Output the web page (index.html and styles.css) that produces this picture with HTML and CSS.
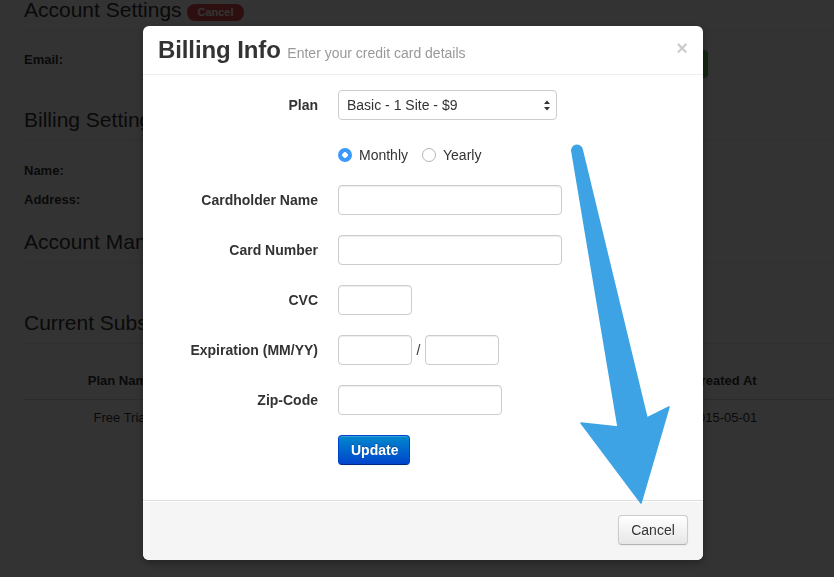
FILE: index.html
```html
<!DOCTYPE html>
<html lang="en">
<head>
    <meta charset="UTF-8">
    <meta name="viewport" content="width=device-width, initial-scale=1.0">
    <title>Account Settings - Billing Info</title>
    <link rel="stylesheet" href="styles.css">
</head>
<body>
    <div class="page">
        <h2 class="section-title">Account Settings <span class="badge-cancel">Cancel</span></h2>
        <div class="email-row">
            <span class="field-label">Email:</span>
            <button class="btn-success">Save</button>
        </div>

        <h2 class="section-title billing-title">Billing Settings</h2>
        <div class="info-row first"><span class="field-label">Name:</span></div>
        <div class="info-row"><span class="field-label">Address:</span></div>

        <h2 class="section-title manage-title">Account Management</h2>

        <h2 class="section-title subs-title">Current Subscription</h2>
        <table class="subs-table">
            <colgroup>
                <col style="width: 194px">
                <col style="width: 132px">
                <col style="width: 132px">
                <col style="width: 132px">
                <col style="width: 220px">
            </colgroup>
            <thead>
                <tr>
                    <th>Plan Name</th>
                    <th>Price</th>
                    <th>Status</th>
                    <th>Ends At</th>
                    <th>Created At</th>
                </tr>
            </thead>
            <tbody>
                <tr>
                    <td>Free Trial</td>
                    <td>$0</td>
                    <td>Active</td>
                    <td>2015-05-15</td>
                    <td>2015-05-01</td>
                </tr>
            </tbody>
        </table>
    </div>

    <div class="backdrop"></div>

    <div class="modal">
        <div class="modal-header">
            <button class="close">&times;</button>
            <h3>Billing Info <small>Enter your credit card details</small></h3>
        </div>
        <div class="modal-body">
            <form class="form-horizontal">
                <div class="control-group">
                    <label class="control-label">Plan</label>
                    <div class="controls">
                        <div class="select-wrap">
                            <select class="plan-select">
                                <option>Basic - 1 Site - $9</option>
                                <option>Pro - 5 Sites - $29</option>
                            </select>
                            <svg class="select-caret" width="8" height="11" viewBox="0 0 8 11">
                                <path d="M4 0.5 L7 4 L1 4 Z" fill="#333"/>
                                <path d="M4 10.5 L7 7 L1 7 Z" fill="#333"/>
                            </svg>
                        </div>
                    </div>
                </div>
                <div class="control-group">
                    <div class="controls radio-row">
                        <label class="radio-inline"><input type="radio" name="interval" checked> Monthly</label>
                        <label class="radio-inline"><input type="radio" name="interval"> Yearly</label>
                    </div>
                </div>
                <div class="control-group">
                    <label class="control-label">Cardholder Name</label>
                    <div class="controls"><input type="text" class="input-xlarge"></div>
                </div>
                <div class="control-group">
                    <label class="control-label">Card Number</label>
                    <div class="controls"><input type="text" class="input-xlarge"></div>
                </div>
                <div class="control-group">
                    <label class="control-label">CVC</label>
                    <div class="controls"><input type="text" class="input-mini"></div>
                </div>
                <div class="control-group">
                    <label class="control-label">Expiration (MM/YY)</label>
                    <div class="controls expiry">
                        <input type="text" class="input-mini">
                        <span class="slash">/</span>
                        <input type="text" class="input-mini">
                    </div>
                </div>
                <div class="control-group">
                    <label class="control-label">Zip-Code</label>
                    <div class="controls"><input type="text" class="input-medium"></div>
                </div>
                <div class="control-group">
                    <div class="controls">
                        <button type="button" class="btn btn-primary">Update</button>
                    </div>
                </div>
            </form>
        </div>
        <div class="modal-footer">
            <button type="button" class="btn">Cancel</button>
        </div>
    </div>

    <!-- callout pointing at the cancel button -->
    <svg class="callout-arrow" width="834" height="577" viewBox="0 0 834 577">
        <path d="M572 152 L618 427 L581 423 L641 503 L669 407 L647 418 L582 149 A5.2 5.2 0 0 0 572 152 Z"
              fill="#3ea3e4" stroke="#3ea3e4" stroke-width="1.5" stroke-linejoin="round"/>
    </svg>
</body>
</html>
```

FILE: styles.css
```css
html, body {
    margin: 0;
    overflow: hidden;
}
body {
    font-family: "Liberation Sans", Arial, sans-serif;
    font-size: 13px;
    line-height: 20px;
    color: #333;
    background: #fff;
    width: 834px;
    height: 577px;
}

/* page behind the dialog */
.page {
    margin-top: -5px;
    padding-left: 24px;
}
.section-title {
    margin: 0;
    font-size: 21px;
    font-weight: normal;
    line-height: 30px;
    padding-bottom: 5px;
    border-bottom: 1px solid #eee;
    white-space: nowrap;
}
.badge-cancel {
    display: inline-block;
    vertical-align: 1px;
    padding: 0 10px;
    line-height: 17px;
    font-size: 11px;
    font-weight: bold;
    color: #fff;
    background: #e24a4a;
    border-radius: 8px;
}
.field-label {
    font-weight: bold;
}
.email-row {
    display: flex;
    align-items: flex-start;
    width: 684px;
    margin-top: 19px;
}
.btn-success {
    margin-left: auto;
    width: 90px;
    height: 28px;
    border: 0;
    border-radius: 4px;
    background: #5bb75b;
    color: #fff;
    font: 13px "Liberation Sans", Arial, sans-serif;
}
.billing-title { margin-top: 27px; }
.info-row { margin-bottom: 9px; }
.info-row.first { margin-top: 20px; }
.manage-title { margin-top: 17px; }
.subs-title { margin-top: 45px; }

.subs-table {
    margin-top: 19px;
    width: 810px;
    table-layout: fixed;
    border-collapse: collapse;
}
.subs-table th,
.subs-table td {
    padding: 8px;
    line-height: 20px;
    text-align: center;
}
.subs-table td {
    border-top: 1px solid #ddd;
}

.backdrop {
    position: fixed;
    inset: 0;
    background: #000;
    opacity: 0.8;
}

/* dialog */
.modal {
    position: absolute;
    top: 26px;
    left: 143px;
    width: 560px;
    background: #fff;
    border-radius: 6px;
    box-shadow: 0 3px 7px rgba(0, 0, 0, 0.3);
    font-size: 14px;
}
.modal-header {
    padding: 9px 15px;
    border-bottom: 1px solid #eee;
}
.modal-header h3 {
    margin: 0;
    font-size: 24px;
    line-height: 30px;
    font-weight: bold;
    letter-spacing: -0.1px;
    color: #333;
}
.modal-header h3 small {
    font-size: 14px;
    line-height: 1;
    font-weight: normal;
    letter-spacing: 0;
    color: #999;
}
.close {
    float: right;
    margin-top: 3px;
    padding: 0;
    border: 0;
    background: none;
    font: bold 20px/20px "Liberation Sans", Arial, sans-serif;
    color: #000;
    opacity: 0.2;
}
.modal-body {
    padding: 15px;
}
.control-group {
    display: flex;
    margin-bottom: 20px;
}
.control-label {
    width: 160px;
    flex: none;
    padding-top: 5px;
    text-align: right;
    font-weight: bold;
    line-height: 20px;
}
.controls {
    margin-left: 20px;
    display: flex;
    align-items: center;
}
.control-group > .controls:first-child {
    margin-left: 180px;
}

.select-wrap {
    position: relative;
}
.plan-select {
    appearance: none;
    -webkit-appearance: none;
    box-sizing: border-box;
    width: 219px;
    height: 30px;
    padding: 0 8px;
    border: 1px solid #ccc;
    border-radius: 4px;
    background: #fff;
    font: 14px "Liberation Sans", Arial, sans-serif;
    color: #333;
}
.select-caret {
    position: absolute;
    right: 6px;
    top: 10px;
    pointer-events: none;
}

.radio-row {
    padding-top: 5px;
    gap: 14px;
}
.radio-inline {
    display: flex;
    align-items: center;
    gap: 7px;
    line-height: 20px;
}
.radio-inline input {
    appearance: none;
    -webkit-appearance: none;
    margin: 0;
    width: 14px;
    height: 14px;
    border: 1px solid #b5b5b5;
    border-radius: 50%;
    background: #fff;
    box-sizing: border-box;
}
.radio-inline input:checked {
    border: 0;
    background: radial-gradient(circle, #fff 0 2.5px, #3b99fc 3px);
}

input[type="text"] {
    box-sizing: border-box;
    height: 30px;
    margin: 0;
    padding: 4px 6px;
    border: 1px solid #ccc;
    border-radius: 4px;
    box-shadow: inset 0 1px 1px rgba(0, 0, 0, 0.075);
    font: 14px "Liberation Sans", Arial, sans-serif;
}
.input-xlarge { width: 224px; }
.input-medium { width: 164px; }
.input-mini { width: 74px; }
.expiry .slash {
    width: 13px;
    text-align: center;
    color: #333;
}

.btn {
    box-sizing: border-box;
    height: 30px;
    padding: 4px 12px;
    border: 1px solid #ccc;
    border-bottom-color: #b3b3b3;
    border-radius: 4px;
    background: linear-gradient(#fff, #e6e6e6);
    box-shadow: inset 0 1px 0 rgba(255, 255, 255, 0.2), 0 1px 2px rgba(0, 0, 0, 0.05);
    font: 14px/20px "Liberation Sans", Arial, sans-serif;
    color: #333;
    text-shadow: 0 1px 1px rgba(255, 255, 255, 0.75);
}
.btn-primary {
    width: 72px;
    border-color: #0044cc #0044cc #002a80;
    background: linear-gradient(#0088cc, #0044cc);
    color: #fff;
    font-weight: bold;
    text-shadow: 0 -1px 0 rgba(0, 0, 0, 0.25);
}
.modal-footer {
    padding: 14px 15px 15px;
    background: #f5f5f5;
    border-top: 1px solid #ddd;
    border-radius: 0 0 6px 6px;
    box-shadow: inset 0 1px 0 #fff;
    display: flex;
    justify-content: flex-end;
}
.modal-footer .btn {
    width: 70px;
}

.callout-arrow {
    position: absolute;
    top: 0;
    left: 0;
    pointer-events: none;
}
```
